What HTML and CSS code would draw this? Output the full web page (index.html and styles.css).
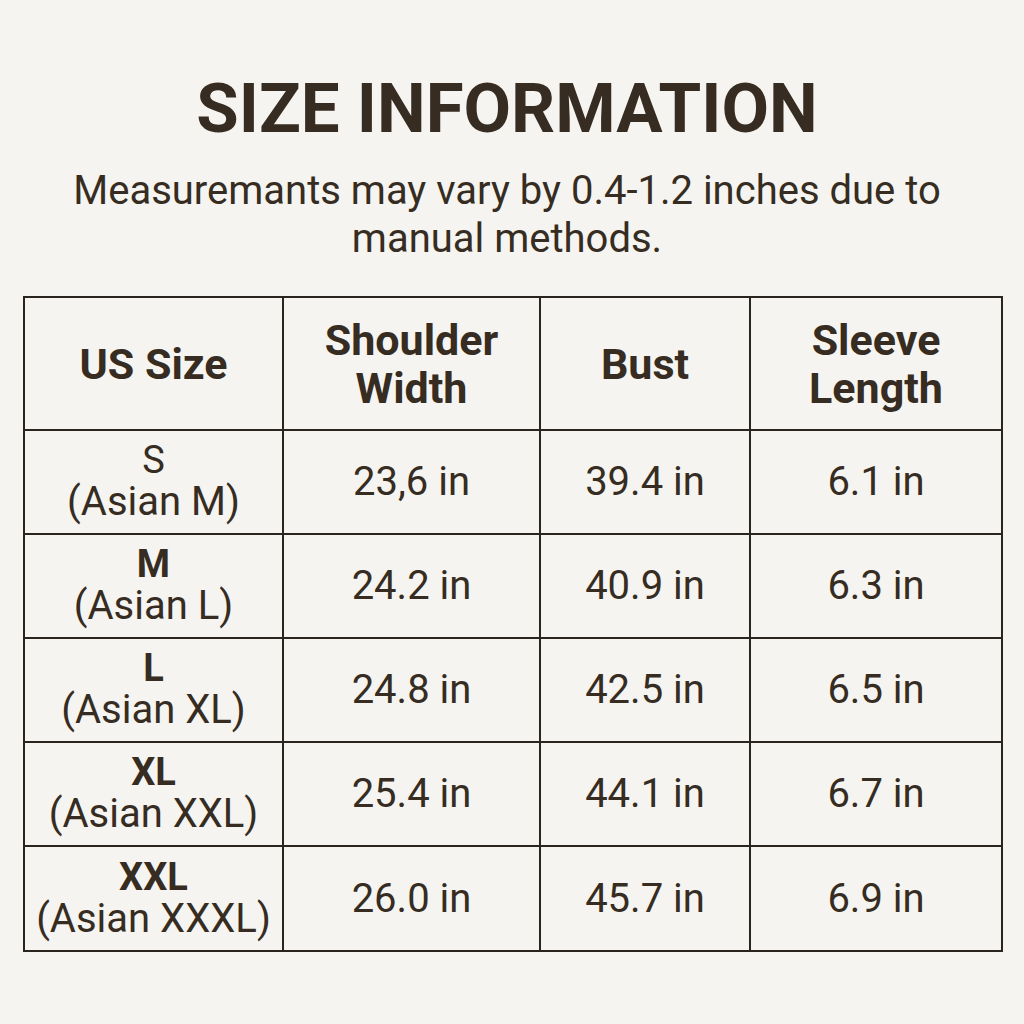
FILE: index.html
```html
<!DOCTYPE html>
<html>
<head>
<meta charset="utf-8">
<link rel="stylesheet" href="styles.css">
</head>
<body>
<div class="page">
  <h1 class="title">SIZE INFORMATION</h1>
  <p class="note">Measuremants may vary by 0.4-1.2 inches due to<br>manual methods.</p>
  <table class="sizes">
    <colgroup>
      <col class="c1"><col class="c2"><col class="c3"><col class="c4">
    </colgroup>
    <thead>
      <tr class="head"><th>US Size</th><th>Shoulder<br>Width</th><th>Bust</th><th>Sleeve<br>Length</th></tr>
    </thead>
    <tbody>
      <tr><td class="sz"><span class="main reg">S</span><span class="alt">(Asian M)</span></td><td>23,6 in</td><td>39.4 in</td><td>6.1 in</td></tr>
      <tr><td class="sz"><span class="main">M</span><span class="alt">(Asian L)</span></td><td>24.2 in</td><td>40.9 in</td><td>6.3 in</td></tr>
      <tr><td class="sz"><span class="main">L</span><span class="alt">(Asian XL)</span></td><td>24.8 in</td><td>42.5 in</td><td>6.5 in</td></tr>
      <tr><td class="sz"><span class="main">XL</span><span class="alt">(Asian XXL)</span></td><td>25.4 in</td><td>44.1 in</td><td>6.7 in</td></tr>
      <tr><td class="sz"><span class="main">XXL</span><span class="alt">(Asian XXXL)</span></td><td>26.0 in</td><td>45.7 in</td><td>6.9 in</td></tr>
    </tbody>
  </table>
</div>
</body>
</html>
```
FILE: styles.css
```css
html, body { margin: 0; padding: 0; background: #f5f4f0; }
body { font-family: Roboto, "Liberation Sans", sans-serif; color: #362c22; }
.page { width: 1024px; height: 1024px; padding-top: 64px; box-sizing: border-box; }
.title { margin: 0 0 0 -10px; text-align: center; font-size: 69px; font-weight: 700; line-height: 90px; }
.note { margin: 13px 0 0 -10px; text-align: center; font-size: 40px; line-height: 48px; }
.sizes { margin: 33px 0 0 23px; width: 978px; border-collapse: collapse; table-layout: fixed; }
.c1 { width: 259px; } .c2 { width: 257px; } .c3 { width: 210px; } .c4 { width: 252px; }
.sizes th, .sizes td { border: 2px solid #2a241e; text-align: center; vertical-align: middle; padding: 0; }
.sizes th { height: 131px; font-size: 43px; font-weight: 700; line-height: 48px; }
.sizes td { height: 102px; font-size: 40px; line-height: 42px; }
.sizes tbody tr:last-child td { height: 103px; }
.sz .main, .sz .alt { display: block; }
.sz .main { font-weight: 700; font-size: 38px; line-height: 40px; }
.sz .main.reg { font-weight: 400; }
.sz .alt { font-size: 40px; line-height: 44px; }
```
